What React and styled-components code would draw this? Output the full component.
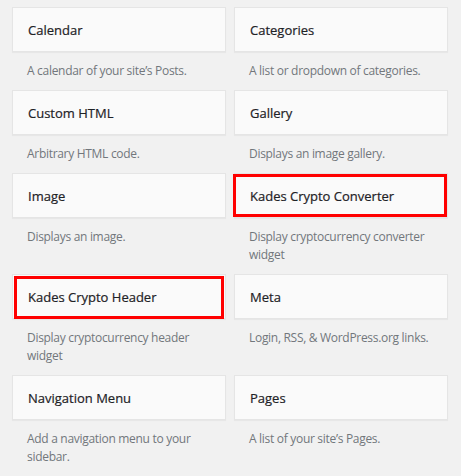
import styled, { createGlobalStyle } from 'styled-components'

const GlobalStyle = createGlobalStyle`
  html, body {
    margin: 0;
    padding: 0;
    background: #f1f1f1;
  }
  body {
    font-family: "Open Sans", "Noto Sans", sans-serif;
  }
`

const widgets = [
  { title: 'Calendar', desc: 'A calendar of your site’s Posts.' },
  { title: 'Categories', desc: 'A list or dropdown of categories.' },
  { title: 'Custom HTML', desc: 'Arbitrary HTML code.' },
  { title: 'Gallery', desc: 'Displays an image gallery.' },
  { title: 'Image', desc: 'Displays an image.' },
  {
    title: 'Kades Crypto Converter',
    desc: 'Display cryptocurrency converter widget',
    mark: { top: 1, left: -1, right: 1, bottom: 1 },
  },
  {
    title: 'Kades Crypto Header',
    desc: 'Display cryptocurrency header widget',
    mark: { top: 2, left: 2, right: 2, bottom: 0 },
  },
  { title: 'Meta', desc: 'Login, RSS, & WordPress.org links.' },
  { title: 'Navigation Menu', desc: 'Add a navigation menu to your sidebar.' },
  { title: 'Pages', desc: 'A list of your site’s Pages.' },
]

const Grid = styled.div`
  display: grid;
  grid-template-columns: 214px 214px;
  column-gap: 8px;
  padding: 7px 13px 0 12px;
`

const Widget = styled.div`
  display: flex;
  flex-direction: column;
`

const Card = styled.div`
  position: relative;
  height: 43px;
  display: flex;
  align-items: center;
  padding: 0 15px;
  background: #fafafa;
  border: 1px solid #e5e5e5;
  box-shadow: 0 1px 1px rgba(0, 0, 0, 0.04);
`

const Title = styled.h3`
  margin: 0;
  font-size: 13px;
  font-weight: 400;
  color: #1e2226;
  -webkit-text-stroke: 0.2px #1e2226;
`

// red annotation box drawn over a card
const Mark = styled.span`
  position: absolute;
  top: ${(p) => p.$top}px;
  left: ${(p) => p.$left}px;
  right: ${(p) => p.$right}px;
  bottom: ${(p) => p.$bottom}px;
  border: 3px solid #ff0000;
  pointer-events: none;
`

const Desc = styled.p`
  margin: 0;
  padding: 10px 10px 10px 15px;
  font-size: 12px;
  letter-spacing: -0.3px;
  line-height: 18px;
  color: #72777c;
`

export default function App() {
  return (
    <>
      <GlobalStyle />
      <Grid>
        {widgets.map((w) => (
          <Widget key={w.title}>
            <Card>
              <Title>{w.title}</Title>
              {w.mark && (
                <Mark
                  $top={w.mark.top - 1}
                  $left={w.mark.left - 1}
                  $right={w.mark.right - 1}
                  $bottom={w.mark.bottom - 1}
                />
              )}
            </Card>
            <Desc>{w.desc}</Desc>
          </Widget>
        ))}
      </Grid>
    </>
  )
}
